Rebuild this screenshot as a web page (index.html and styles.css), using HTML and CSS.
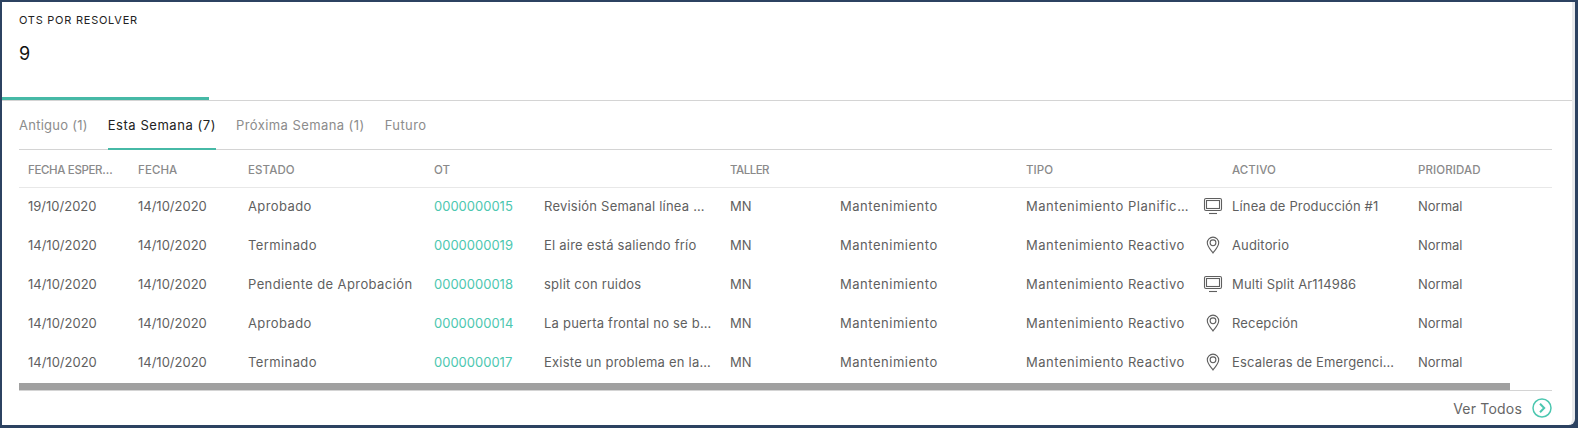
FILE: index.html
```html
<!DOCTYPE html>
<html lang="es">

<head>
    <meta charset="UTF-8">
    <link rel="stylesheet" href="styles.css">
    <title>OTs por resolver</title>
</head>

<body>
    <main class="panel">
        <section class="resumen">
            <h2 class="resumen-titulo">OTS POR RESOLVER</h2>
            <p class="resumen-valor">9</p>
        </section>
        <div class="progreso"><div class="progreso-barra"></div></div>

        <div class="contenido">
            <nav class="tabs">
                <a class="tab">Antiguo (1)</a>
                <a class="tab tab-activa">Esta Semana (7)</a>
                <a class="tab">Próxima Semana (1)</a>
                <a class="tab">Futuro</a>
            </nav>

            <div class="tabla-scroll">
                <table class="tabla">
                    <colgroup>
                        <col class="c-corta"><col class="c-corta"><col class="c-larga">
                        <col class="c-corta"><col class="c-larga">
                        <col class="c-corta"><col class="c-larga">
                        <col class="c-larga"><col class="c-icono">
                        <col class="c-larga"><col class="c-larga">
                    </colgroup>
                    <thead>
                        <tr>
                            <th>FECHA ESPERADA</th>
                            <th>FECHA</th>
                            <th>ESTADO</th>
                            <th>OT</th>
                            <th></th>
                            <th>TALLER</th>
                            <th></th>
                            <th>TIPO</th>
                            <th></th>
                            <th>ACTIVO</th>
                            <th>PRIORIDAD</th>
                        </tr>
                    </thead>
                    <tbody>
                        <tr>
                            <td>19/10/2020</td>
                            <td>14/10/2020</td>
                            <td>Aprobado</td>
                            <td><a class="ot">0000000015</a></td>
                            <td>Revisión Semanal línea de producción</td>
                            <td>MN</td>
                            <td>Mantenimiento</td>
                            <td>Mantenimiento Planificado</td>
                            <td class="celda-icono">
                                <svg class="icono" viewBox="0 0 20 18"><rect x="1.5" y="1.5" width="17" height="12" rx="1.5"/><rect x="3.5" y="3.5" width="13" height="8"/><path d="M6 16.5h8"/></svg>
                            </td>
                            <td>Línea de Producción #1</td>
                            <td>Normal</td>
                        </tr>
                        <tr>
                            <td>14/10/2020</td>
                            <td>14/10/2020</td>
                            <td>Terminado</td>
                            <td><a class="ot">0000000019</a></td>
                            <td>El aire está saliendo frío</td>
                            <td>MN</td>
                            <td>Mantenimiento</td>
                            <td>Mantenimiento Reactivo</td>
                            <td class="celda-icono">
                                <svg class="icono" viewBox="0 0 20 18"><path d="M10 17C7.500 13.500 4.300 10.600 4.300 6.800a5.700 5.700 0 0 1 11.400 0C15.700 10.600 12.500 13.500 10 17z"/><circle cx="10" cy="6.800" r="2.900"/></svg>
                            </td>
                            <td>Auditorio</td>
                            <td>Normal</td>
                        </tr>
                        <tr>
                            <td>14/10/2020</td>
                            <td>14/10/2020</td>
                            <td>Pendiente de Aprobación</td>
                            <td><a class="ot">0000000018</a></td>
                            <td>split con ruidos</td>
                            <td>MN</td>
                            <td>Mantenimiento</td>
                            <td>Mantenimiento Reactivo</td>
                            <td class="celda-icono">
                                <svg class="icono" viewBox="0 0 20 18"><rect x="1.5" y="1.5" width="17" height="12" rx="1.5"/><rect x="3.5" y="3.5" width="13" height="8"/><path d="M6 16.5h8"/></svg>
                            </td>
                            <td>Multi Split Ar114986</td>
                            <td>Normal</td>
                        </tr>
                        <tr>
                            <td>14/10/2020</td>
                            <td>14/10/2020</td>
                            <td>Aprobado</td>
                            <td><a class="ot">0000000014</a></td>
                            <td>La puerta frontal no se bloquea</td>
                            <td>MN</td>
                            <td>Mantenimiento</td>
                            <td>Mantenimiento Reactivo</td>
                            <td class="celda-icono">
                                <svg class="icono" viewBox="0 0 20 18"><path d="M10 17C7.500 13.500 4.300 10.600 4.300 6.800a5.700 5.700 0 0 1 11.400 0C15.700 10.600 12.500 13.500 10 17z"/><circle cx="10" cy="6.800" r="2.900"/></svg>
                            </td>
                            <td>Recepción</td>
                            <td>Normal</td>
                        </tr>
                        <tr>
                            <td>14/10/2020</td>
                            <td>14/10/2020</td>
                            <td>Terminado</td>
                            <td><a class="ot">0000000017</a></td>
                            <td>Existe un problema en la escalera</td>
                            <td>MN</td>
                            <td>Mantenimiento</td>
                            <td>Mantenimiento Reactivo</td>
                            <td class="celda-icono">
                                <svg class="icono" viewBox="0 0 20 18"><path d="M10 17C7.500 13.500 4.300 10.600 4.300 6.800a5.700 5.700 0 0 1 11.400 0C15.700 10.600 12.500 13.500 10 17z"/><circle cx="10" cy="6.800" r="2.900"/></svg>
                            </td>
                            <td>Escaleras de Emergencia Norte</td>
                            <td>Normal</td>
                        </tr>
                    </tbody>
                </table>
            </div>
            <div class="barra-scroll"><div class="barra-scroll-thumb"></div></div>

            <footer class="pie">
                <a class="ver-todos">Ver Todos</a>
                <svg class="icono-ir" viewBox="0 0 20 20"><circle cx="10" cy="10" r="9"/><path class="icono-ir-flecha" d="M8 5.800l4.200 4.200-4.200 4.200"/></svg>
            </footer>
        </div>
    </main>
</body>

</html>
```

FILE: styles.css
```css
* {
    margin: 0;
    padding: 0;
    box-sizing: border-box;
    font-family: 'Inter', 'Open Sans', sans-serif;
}

html,
body {
    height: 100%;
    overflow: hidden;
}

body {
    background-color: #2c4261;
    padding: 2px 3px 3px 2px;
}

.panel {
    height: 100%;
    background-color: #fff;
    border-right: 3px solid #e8eaed;
    border-bottom-right-radius: 6px;
    display: flex;
    flex-direction: column;
}

.resumen {
    height: 95px;
    padding: 11px 17px 0;
}

.resumen-titulo {
    font-size: 11px;
    line-height: 14px;
    font-weight: 400;
    letter-spacing: 0.75px;
    color: #222;
}

.resumen-valor {
    margin-top: 14px;
    font-size: 18px;
    line-height: 26px;
    color: #111;
}

.progreso {
    height: 4px;
    border-bottom: 1px solid #d4d4d4;
}

.progreso-barra {
    width: 207px;
    height: 3px;
    background-color: #46b9a6;
}

.contenido {
    flex: 1;
    padding: 0 20px 0 17px;
    display: flex;
    flex-direction: column;
    min-height: 0;
}

.tabs {
    height: 49px;
    display: flex;
    gap: 20px;
    border-bottom: 1px solid #d4d4d4;
}

.tab {
    font-size: 13px;
    line-height: 48px;
    height: 49px;
    letter-spacing: 0.42px;
    color: #8c8c8c;
}

.tab:first-child {
    letter-spacing: 0.25px;
}

.tab-activa {
    color: #222;
    letter-spacing: 0.55px;
    border-bottom: 2px solid #46b9a6;
}

.tabla-scroll {
    height: 233px;
    overflow: hidden;
}

.tabla {
    width: 1576px;
    table-layout: fixed;
    border-collapse: collapse;
}

.c-corta {
    width: 110px;
}

.c-larga {
    width: 186px;
}

.c-icono {
    width: 20px;
}

.tabla th,
.tabla td {
    padding: 0 9px;
    white-space: nowrap;
    overflow: hidden;
    text-overflow: ellipsis;
    text-align: left;
}

.tabla th {
    height: 37px;
    padding-top: 3px;
    font-size: 11.5px;
    font-weight: 500;
    letter-spacing: 0.1px;
    color: #8a8a8a;
    border-bottom: 1px solid #e8e8e8;
}

.tabla th:first-child {
    letter-spacing: -0.35px;
}

.tabla th:nth-child(6) {
    letter-spacing: -0.5px;
}

.tabla td {
    height: 39px;
    padding-bottom: 1px;
    font-size: 13px;
    color: #5f5f5f;
}

/* Estado */
.tabla td:nth-child(3) {
    letter-spacing: 0.4px;
}

/* Descripcion */
.tabla td:nth-child(5) {
    letter-spacing: 0.22px;
}

/* Taller y tipo */
.tabla td:nth-child(7),
.tabla td:nth-child(8) {
    letter-spacing: 0.52px;
}

/* Activo */
.tabla td:nth-child(10) {
    letter-spacing: 0.15px;
}

.tabla td.celda-icono {
    padding: 0 0 1px;
    overflow: visible;
}

.ot {
    color: #4cc7b0;
}

.icono {
    display: block;
    width: 20px;
    height: 18px;
    fill: none;
    stroke: #5f5f5f;
    stroke-width: 1.1;
}

.barra-scroll {
    height: 8px;
    border-bottom: 1px solid #d4d4d4;
}

.barra-scroll-thumb {
    width: 1491px;
    height: 7px;
    background-color: #a0a0a0;
}

.pie {
    height: 34px;
    display: flex;
    justify-content: flex-end;
    align-items: center;
    gap: 10px;
}

.ver-todos {
    font-size: 14px;
    letter-spacing: 0.2px;
    color: #666;
}

.icono-ir {
    width: 20px;
    height: 20px;
    fill: none;
    stroke: #4cc7b0;
    stroke-width: 1.5;
}

.icono-ir-flecha {
    stroke-width: 2;
}
```
